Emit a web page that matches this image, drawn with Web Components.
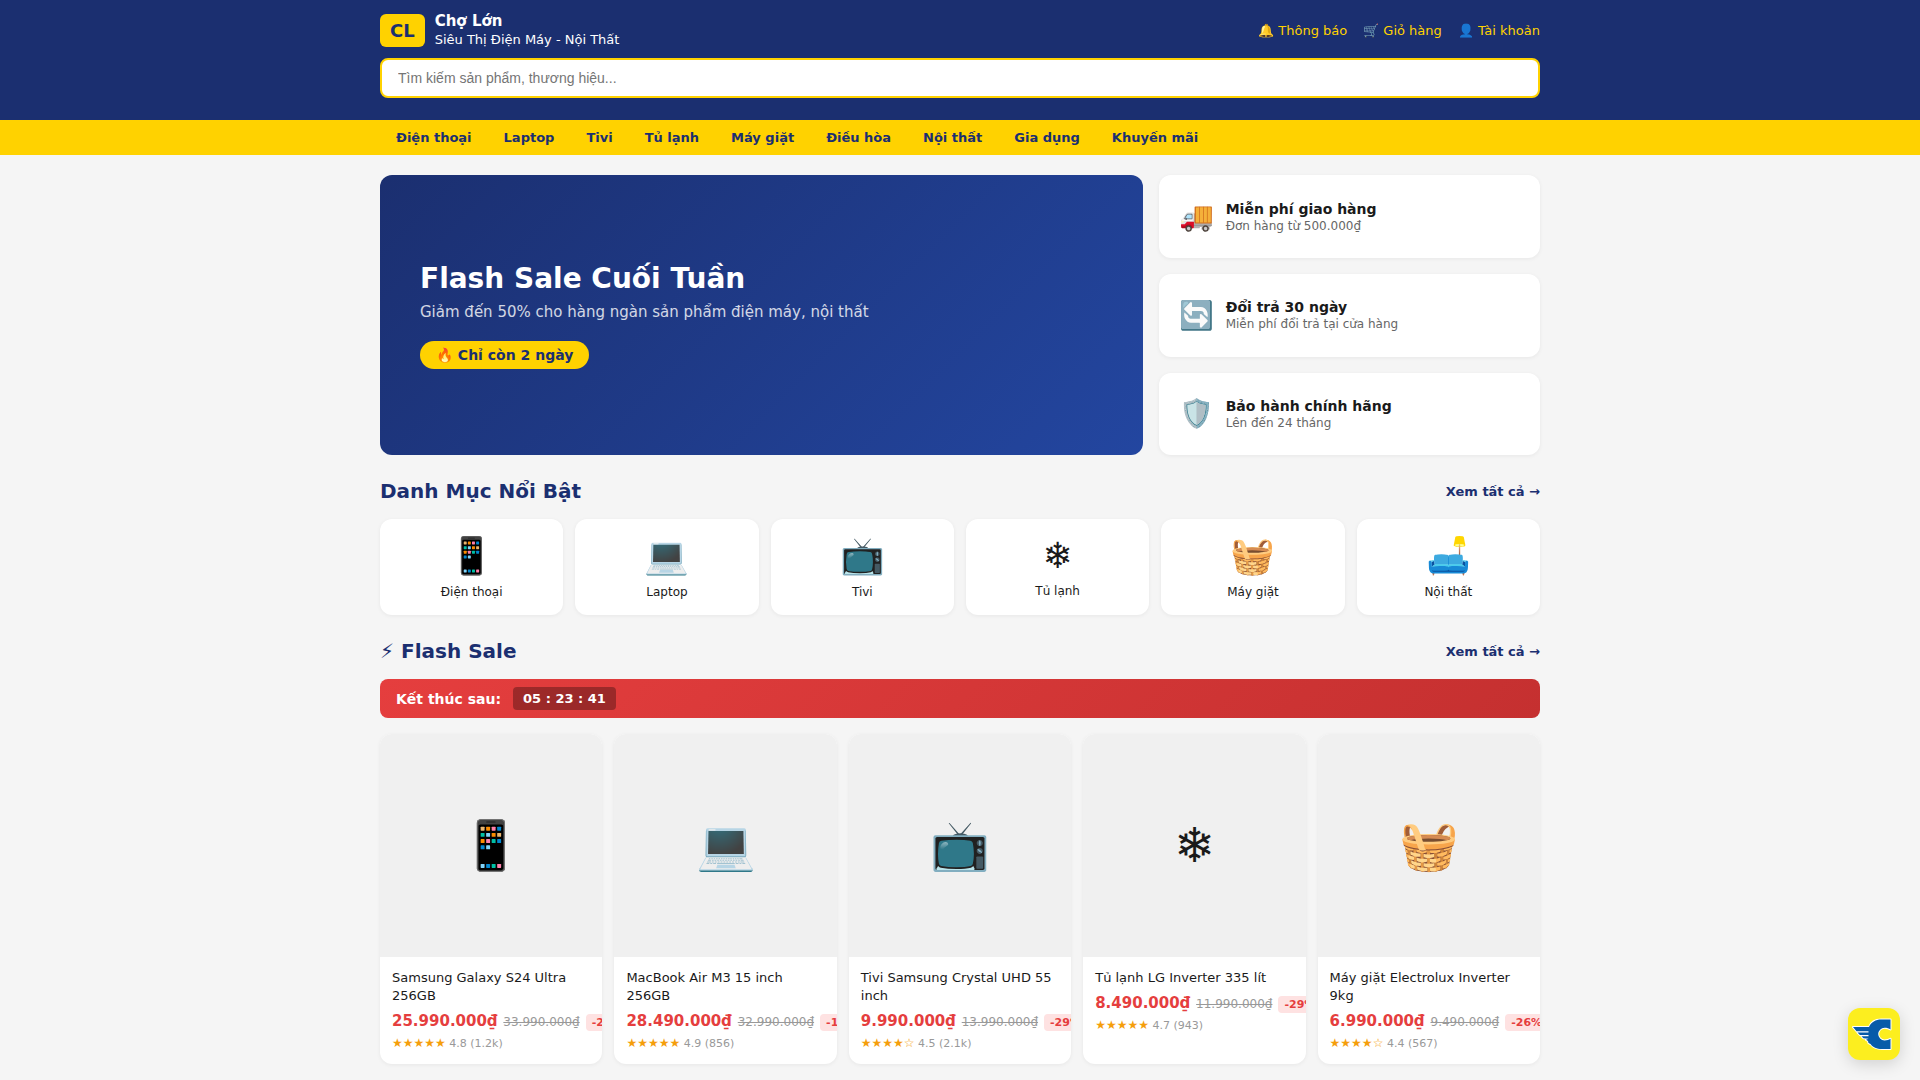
<!DOCTYPE html>
<html lang="vi">
<head>
<meta charset="UTF-8">
<meta name="viewport" content="width=device-width, initial-scale=1.0">
<title>Chợ Lớn - Siêu Thị Điện Máy - Nội Thất</title>
<style>
  :root {
    --navy: #1b2f70;
    --yellow: #ffd200;
    --red: #e53e3e;
    --page: 1200px;
    --shadow: 0 1px 4px rgba(0, 0, 0, 0.06);
  }

  body {
    margin: 0;
    background: #f5f5f5;
    color: #1a1a1a;
    font-family: "DejaVu Sans", sans-serif;
  }

  main {
    max-width: var(--page);
    margin: 0 auto;
    padding: 20px 20px 16px;
    box-sizing: border-box;
  }

  .hero {
    display: grid;
    grid-template-columns: 2fr 1fr;
    gap: 16px;
    min-height: 280px;
  }

  .perks {
    display: grid;
    grid-auto-rows: 1fr;
    gap: 16px;
  }

  .categories {
    display: grid;
    grid-template-columns: repeat(6, 1fr);
    gap: 12px;
  }

  .products {
    display: grid;
    grid-template-columns: repeat(5, minmax(0, 1fr));
    gap: 12px;
    margin-top: 16px;
  }
</style>
</head>
<body>
  <shop-header></shop-header>
  <shop-nav></shop-nav>

  <main>
    <section class="hero">
      <hero-banner>
        <span slot="title">Flash Sale Cuối Tuần</span>
        <span slot="text">Giảm đến 50% cho hàng ngàn sản phẩm điện máy, nội thất</span>
        <span slot="badge">🔥 Chỉ còn 2 ngày</span>
      </hero-banner>
      <div class="perks">
        <perk-card icon="🚚"><span slot="title">Miễn phí giao hàng</span>Đơn hàng từ 500.000₫</perk-card>
        <perk-card icon="🔄"><span slot="title">Đổi trả 30 ngày</span>Miễn phí đổi trả tại cửa hàng</perk-card>
        <perk-card icon="🛡️"><span slot="title">Bảo hành chính hãng</span>Lên đến 24 tháng</perk-card>
      </div>
    </section>

    <section-head>Danh Mục Nổi Bật</section-head>
    <section class="categories">
      <category-card icon="📱">Điện thoại</category-card>
      <category-card icon="💻">Laptop</category-card>
      <category-card icon="📺">Tivi</category-card>
      <category-card icon="❄">Tủ lạnh</category-card>
      <category-card icon="🧺">Máy giặt</category-card>
      <category-card icon="🛋️">Nội thất</category-card>
    </section>

    <section-head>⚡ Flash Sale</section-head>
    <flash-timer time="05 : 23 : 41">Kết thúc sau:</flash-timer>
    <section class="products">
      <product-card icon="📱" price="25.990.000₫" old="33.990.000₫" off="-24%" stars="5" rating="4.8 (1.2k)">Samsung Galaxy S24 Ultra 256GB</product-card>
      <product-card icon="💻" price="28.490.000₫" old="32.990.000₫" off="-14%" stars="5" rating="4.9 (856)">MacBook Air M3 15 inch 256GB</product-card>
      <product-card icon="📺" price="9.990.000₫" old="13.990.000₫" off="-29%" stars="4" rating="4.5 (2.1k)">Tivi Samsung Crystal UHD 55 inch</product-card>
      <product-card icon="❄" price="8.490.000₫" old="11.990.000₫" off="-29%" stars="5" rating="4.7 (943)">Tủ lạnh LG Inverter 335 lít</product-card>
      <product-card icon="🧺" price="6.990.000₫" old="9.490.000₫" off="-26%" stars="4" rating="4.4 (567)">Máy giặt Electrolux Inverter 9kg</product-card>
    </section>
  </main>

  <chat-button></chat-button>

<script>
class ShopElement extends HTMLElement {
  constructor() {
    super();
    this.attachShadow({ mode: "open" });
  }

  connectedCallback() {
    this.shadowRoot.innerHTML = this.render();
  }

  attr(name) {
    return this.getAttribute(name) || "";
  }
}

class ShopHeader extends ShopElement {
  render() {
    return `
      <style>
        :host {
          display: block;
          background: var(--navy);
          color: #fff;
        }

        header {
          max-width: var(--page);
          margin: 0 auto;
          padding: 12px 20px 22px;
          box-sizing: border-box;
        }

        .top {
          display: flex;
          justify-content: space-between;
          align-items: center;
        }

        .brand {
          display: flex;
          align-items: center;
          gap: 10px;
          color: inherit;
          text-decoration: none;
        }

        .logo {
          padding: 6px 10px;
          background: var(--yellow);
          color: var(--navy);
          border-radius: 6px;
          font-size: 18px;
          font-weight: bold;
        }

        .name,
        .tagline {
          display: block;
        }

        .name {
          margin-bottom: 1px;
          font-size: 15px;
          line-height: 1.2;
          font-weight: bold;
        }

        .tagline {
          font-size: 13px;
          line-height: 1.4;
        }

        .links {
          display: flex;
          gap: 16px;
          font-size: 13px;
        }

        .links a {
          color: var(--yellow);
          text-decoration: none;
        }

        input {
          display: block;
          width: 100%;
          margin-top: 9px;
          padding: 10px 16px;
          box-sizing: border-box;
          border: 2px solid var(--yellow);
          border-radius: 8px;
          background: #fff;
          font: 14px "Liberation Sans", Arial, sans-serif;
          outline: none;
        }
      </style>

      <header>
        <div class="top">
          <a class="brand" href="#">
            <span class="logo">CL</span>
            <span>
              <span class="name">Chợ Lớn</span>
              <span class="tagline">Siêu Thị Điện Máy - Nội Thất</span>
            </span>
          </a>
          <div class="links">
            <a href="#">🔔 Thông báo</a>
            <a href="#">🛒 Giỏ hàng</a>
            <a href="#">👤 Tài khoản</a>
          </div>
        </div>
        <input type="search" aria-label="Tìm kiếm" placeholder="Tìm kiếm sản phẩm, thương hiệu...">
      </header>
    `;
  }
}

class ShopNav extends ShopElement {
  render() {
    const items = ["Điện thoại", "Laptop", "Tivi", "Tủ lạnh", "Máy giặt", "Điều hòa", "Nội thất", "Gia dụng", "Khuyến mãi"];
    return `
      <style>
        :host {
          display: block;
          background: var(--yellow);
        }

        nav {
          display: flex;
          max-width: var(--page);
          margin: 0 auto;
          padding: 0 20px;
          box-sizing: border-box;
        }

        a {
          padding: 10px 16px;
          color: var(--navy);
          font-size: 13px;
          font-weight: bold;
          text-decoration: none;
        }
      </style>
      <nav>${items.map(item => `<a href="#">${item}</a>`).join("")}</nav>
    `;
  }
}

class HeroBanner extends ShopElement {
  render() {
    return `
      <style>
        :host {
          display: flex;
          flex-direction: column;
          justify-content: center;
          align-items: flex-start;
          padding: 40px;
          border-radius: 12px;
          background: linear-gradient(135deg, var(--navy), #2346a0);
          color: #fff;
        }

        h1 {
          margin: 0 0 8px;
          font-size: 28px;
        }

        p {
          margin: 0 0 20px;
          font-size: 15px;
          opacity: 0.8;
        }

        .badge {
          padding: 6px 16px;
          border-radius: 20px;
          background: var(--yellow);
          color: var(--navy);
          font-size: 14px;
          font-weight: bold;
        }
      </style>
      <h1><slot name="title"></slot></h1>
      <p><slot name="text"></slot></p>
      <div class="badge"><slot name="badge"></slot></div>
    `;
  }
}

class PerkCard extends ShopElement {
  render() {
    return `
      <style>
        :host {
          display: flex;
          align-items: center;
          gap: 12px;
          padding: 0 20px;
          border-radius: 12px;
          background: #fff;
          box-shadow: var(--shadow);
        }

        .icon {
          font-size: 28px;
        }

        h3,
        p {
          margin: 0;
        }

        h3 {
          margin-bottom: 2px;
          font-size: 14px;
        }

        p {
          color: #666;
          font-size: 12px;
        }
      </style>
      <div class="icon">${this.attr("icon")}</div>
      <div>
        <h3><slot name="title"></slot></h3>
        <p><slot></slot></p>
      </div>
    `;
  }
}

class SectionHead extends ShopElement {
  render() {
    return `
      <style>
        :host {
          display: flex;
          justify-content: space-between;
          align-items: center;
          margin: 24px 0 16px;
          color: var(--navy);
        }

        h2 {
          margin: 0;
          font-size: 20px;
        }

        a {
          color: inherit;
          font-size: 13px;
          font-weight: bold;
          text-decoration: none;
        }
      </style>
      <h2><slot></slot></h2>
      <a href="#">Xem tất cả →</a>
    `;
  }
}

class CategoryCard extends ShopElement {
  render() {
    return `
      <style>
        :host {
          display: block;
          border-radius: 12px;
          background: #fff;
          box-shadow: var(--shadow);
        }

        a {
          display: block;
          padding: 16px;
          color: inherit;
          font-size: 12px;
          text-align: center;
          text-decoration: none;
        }

        .icon {
          margin-bottom: 8px;
          font-size: 36px;
        }
      </style>
      <a href="#">
        <div class="icon">${this.attr("icon")}</div>
        <slot></slot>
      </a>
    `;
  }
}

class FlashTimer extends ShopElement {
  render() {
    return `
      <style>
        :host {
          display: flex;
          align-items: center;
          gap: 12px;
          padding: 8px 16px;
          border-radius: 8px;
          background: linear-gradient(135deg, var(--red), #c53030);
          color: #fff;
          font-size: 14px;
          font-weight: bold;
        }

        time {
          padding: 4px 10px;
          border-radius: 4px;
          background: rgba(0, 0, 0, 0.3);
          font-size: 13px;
        }
      </style>
      <slot></slot>
      <time>${this.attr("time")}</time>
    `;
  }
}

class ProductCard extends ShopElement {
  render() {
    const stars = Number(this.attr("stars"));
    return `
      <style>
        :host {
          display: block;
          overflow: hidden;
          border-radius: 12px;
          background: #fff;
          box-shadow: var(--shadow);
        }

        .image {
          display: flex;
          justify-content: center;
          align-items: center;
          aspect-ratio: 1;
          background: #f0f0f0;
          font-size: 48px;
        }

        .info {
          padding: 12px;
        }

        h3 {
          margin: 0 0 6px;
          font-size: 13px;
          font-weight: normal;
          line-height: 1.4;
        }

        .prices {
          display: flex;
          align-items: baseline;
          gap: 6px;
          margin-bottom: 4px;
          white-space: nowrap;
        }

        .price {
          color: var(--red);
          font-size: 15px;
          line-height: 20px;
          font-weight: bold;
        }

        .old {
          color: #999;
          font-size: 12px;
        }

        .off {
          padding: 2px 6px;
          border-radius: 4px;
          background: #fee2e2;
          color: var(--red);
          font-size: 11px;
          font-weight: bold;
        }

        .rating {
          color: #999;
          font-size: 11px;
          line-height: 16px;
        }

        .stars {
          color: #f59e0b;
          font-size: 12px;
        }
      </style>
      <div class="image">${this.attr("icon")}</div>
      <div class="info">
        <h3><slot></slot></h3>
        <div class="prices">
          <span class="price">${this.attr("price")}</span>
          <s class="old">${this.attr("old")}</s>
          <span class="off">${this.attr("off")}</span>
        </div>
        <div class="rating"><span class="stars">${"★".repeat(stars)}${"☆".repeat(5 - stars)}</span> ${this.attr("rating")}</div>
      </div>
    `;
  }
}

class ChatButton extends ShopElement {
  render() {
    // winged C: the same outline twice, a white edge under the blue fill
    const wing = "M5 19H21C23 14 28 11.500 33 11.500H42.500V21.500C41 20.400 39 19.800 36.500 19.800A6.300 6.300 0 1 0 36.500 32.400C39 32.400 41 31.800 42.500 30.800V41H34C28.500 41 25 39.500 22.500 36L20.500 35L20 33L18 31.800L20.500 30.800L15.500 30.300L13.500 28.300H20.500V27H12L9.500 24.600H20.500V23.200H8.500Z";
    return `
      <style>
        :host {
          position: fixed;
          right: 20px;
          bottom: 20px;
        }

        button {
          display: block;
          width: 52px;
          height: 52px;
          padding: 0;
          border: 0;
          border-radius: 12px;
          background: #fcee1f;
          box-shadow: 0 4px 16px rgba(0, 0, 0, 0.15);
          cursor: pointer;
        }

        svg {
          display: block;
        }
      </style>
      <button type="button" aria-label="Trợ lý Chợ Lớn">
        <svg width="52" height="52" viewBox="0 0 52 52">
          <path d="${wing}" fill="#fff" stroke="#fff" stroke-width="2" stroke-linejoin="round"/>
          <path d="${wing}" fill="#075ba9"/>
        </svg>
      </button>
    `;
  }
}

customElements.define("shop-header", ShopHeader);
customElements.define("shop-nav", ShopNav);
customElements.define("hero-banner", HeroBanner);
customElements.define("perk-card", PerkCard);
customElements.define("section-head", SectionHead);
customElements.define("category-card", CategoryCard);
customElements.define("flash-timer", FlashTimer);
customElements.define("product-card", ProductCard);
customElements.define("chat-button", ChatButton);
</script>
</body>
</html>
